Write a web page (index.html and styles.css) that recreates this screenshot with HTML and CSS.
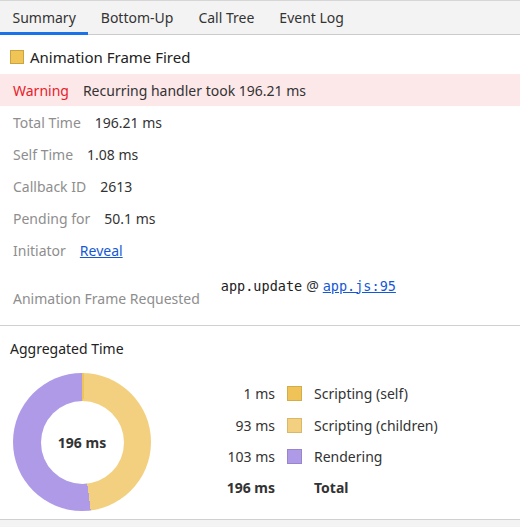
FILE: index.html
```html
<!DOCTYPE html>
<html>
<head>
<meta charset="utf-8">
<link rel="stylesheet" href="styles.css">
</head>
<body>
<div class="tabs">
  <div class="tab active">Summary</div>
  <div class="tab">Bottom-Up</div>
  <div class="tab">Call Tree</div>
  <div class="tab">Event Log</div>
</div>
<div class="details">
  <div class="title"><span class="title-swatch"></span><span>Animation Frame Fired</span></div>
  <div class="row warning"><span class="label warn-label">Warning</span><span class="value">Recurring handler took 196.21 ms</span></div>
  <div class="row"><span class="label">Total Time</span><span class="value">196.21 ms</span></div>
  <div class="row"><span class="label">Self Time</span><span class="value">1.08 ms</span></div>
  <div class="row"><span class="label">Callback ID</span><span class="value">2613</span></div>
  <div class="row"><span class="label">Pending for</span><span class="value">50.1 ms</span></div>
  <div class="row"><span class="label">Initiator</span><a class="link" href="#">Reveal</a></div>
  <div class="stack-row">
    <span class="label stack-label">Animation Frame Requested</span>
    <div class="stack">
      <span class="mono">app.update</span><span class="at">@</span><a class="mono link" href="#">app.js:95</a>
    </div>
  </div>
</div>
<div class="aggregated">
  <div class="agg-title">Aggregated Time</div>
  <div class="agg-body">
    <div class="donut">
      <div class="donut-hole">196 ms</div>
    </div>
    <div class="legend">
      <span class="lv">1 ms</span><span class="sw sw-self"></span><span class="ll">Scripting (self)</span>
      <span class="lv">93 ms</span><span class="sw sw-child"></span><span class="ll">Scripting (children)</span>
      <span class="lv">103 ms</span><span class="sw sw-render"></span><span class="ll">Rendering</span>
      <span class="lv total">196 ms</span><span></span><span class="ll total">Total</span>
    </div>
  </div>
</div>
<div class="footer"></div>
</body>
</html>
```
FILE: styles.css
```css
html, body {
  margin: 0;
  padding: 0;
  background: #fff;
}
body {
  font-family: "Noto Sans", "Open Sans", sans-serif;
  font-size: 14px;
  color: #333;
  width: 520px;
  height: 527px;
  overflow: hidden;
  display: flex;
  flex-direction: column;
}
.tabs {
  display: flex;
  height: 33px;
  background: #f3f3f3;
  border-top: 1px solid #d6d6d6;
  border-bottom: 1px solid #cbcbcb;
}
.tab {
  position: relative;
  padding: 0 12.5px;
  display: flex;
  align-items: center;
  color: #333;
  font-size: 14px;
}
.tab.active::after {
  content: "";
  position: absolute;
  left: 0;
  right: 0;
  bottom: -1px;
  height: 3px;
  background: #1a73e8;
}
.details {
  display: flex;
  flex-direction: column;
  border-bottom: 1px solid #d0d0d0;
}
.title {
  display: flex;
  align-items: center;
  gap: 6px;
  height: 40px;
  padding: 3px 10px 0;
  font-size: 15px;
  color: #222;
  box-sizing: border-box;
}
.title-swatch {
  width: 12px;
  height: 12px;
  background: #f0c457;
  border: 1px solid #c9a43f;
}
.row {
  display: flex;
  align-items: center;
  height: 32px;
  padding: 0 13px;
}
.warning {
  background: #fde8e9;
  margin-top: -1px;
}
.label {
  color: #8e8e8e;
  margin-right: 14px;
}
.warn-label {
  color: #e8212a;
}
.value {
  color: #333;
}
.link {
  color: #1558d6;
  text-decoration: underline;
}
.stack-row {
  display: flex;
  align-items: flex-start;
  padding: 10px 13px 0;
  height: 59px;
  box-sizing: border-box;
}
.stack-label {
  margin-top: 13px;
  margin-right: 21px;
}
.stack {
  display: flex;
  align-items: center;
  gap: 4px;
}
.mono {
  font-family: "DejaVu Sans Mono", "Liberation Mono", monospace;
  font-size: 13.5px;
  color: #222;
}
.mono.link {
  color: #1558d6;
}
.at {
  color: #333;
  font-size: 14px;
}
.aggregated {
  display: flex;
  flex-direction: column;
  border-bottom: 1px solid #d0d0d0;
  flex: 0 0 auto;
}
.agg-title {
  font-size: 14px;
  color: #222;
  padding: 13px 10px 0;
  height: 32px;
  box-sizing: border-box;
}
.agg-body {
  display: flex;
  align-items: flex-start;
  padding: 15px 0 8px 13px;
}
.donut {
  width: 138px;
  height: 138px;
  border-radius: 50%;
  background: conic-gradient(#efc357 0 0.55%, #f3d07f 0.55% 48%, #af9ae8 48% 100%);
  display: flex;
  align-items: center;
  justify-content: center;
}
.donut-hole {
  width: 83px;
  height: 83px;
  border-radius: 50%;
  background: #fff;
  display: flex;
  align-items: center;
  justify-content: center;
  font-weight: bold;
  font-size: 14px;
  color: #333;
}
.legend {
  display: grid;
  grid-template-columns: 124px 15px auto;
  column-gap: 12px;
  row-gap: 0;
  grid-auto-rows: 31.4px;
  align-items: center;
  margin-top: 5px;
  font-size: 14px;
}
.lv {
  text-align: right;
  color: #333;
}
.ll {
  color: #333;
}
.total {
  font-weight: bold;
}
.sw {
  width: 13px;
  height: 13px;
  border: 1px solid;
}
.sw-self {
  background: #efc357;
  border-color: #d4ac4a;
}
.sw-child {
  background: #f3d07f;
  border-color: #d9b86a;
}
.sw-render {
  background: #af9ae8;
  border-color: #9885cc;
}
.footer {
  flex: 1;
  background: #f3f3f3;
}
```
